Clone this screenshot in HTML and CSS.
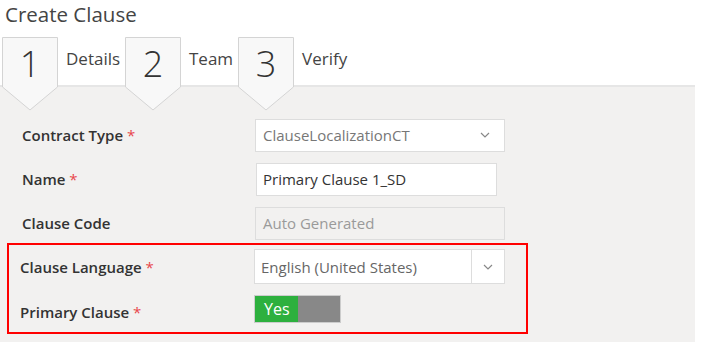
FILE: index.html
```html
<!DOCTYPE html>
<html lang="en">
<head>
    <meta charset="UTF-8">
    <meta name="viewport" content="width=device-width, initial-scale=1.0">
    <title>Create Clause</title>
    <link rel="stylesheet" href="styles.css">
</head>
<body>
    <h1 class="page-title">Create Clause</h1>

    <div class="steps">
        <div class="step">
            <svg class="tab" width="56" height="74" viewBox="0 0 56 74">
                <path d="M0.5 0.5 H55.5 V50 L28 73 L0.5 50 Z" />
                <text x="28" y="40">1</text>
            </svg>
            <span class="step-label label-details">Details</span>
        </div>
        <div class="step">
            <svg class="tab" width="56" height="74" viewBox="0 0 56 74">
                <path d="M0.5 0.5 H55.5 V50 L28 73 L0.5 50 Z" />
                <text x="28" y="40">2</text>
            </svg>
            <span class="step-label label-team">Team</span>
        </div>
        <div class="step">
            <svg class="tab" width="56" height="74" viewBox="0 0 56 74">
                <path d="M0.5 0.5 H55.5 V50 L28 73 L0.5 50 Z" />
                <text x="28" y="40">3</text>
            </svg>
            <span class="step-label">Verify</span>
        </div>
    </div>

    <div class="panel">
        <div class="row">
            <label class="field-label">Contract Type <span class="req">*</span></label>
            <div class="select">
                <span class="select-value">ClauseLocalizationCT</span>
                <svg class="chevron" width="10" height="6" viewBox="0 0 10 6"><polyline points="1,1 5,5 9,1" /></svg>
            </div>
        </div>
        <div class="row">
            <label class="field-label">Name <span class="req">*</span></label>
            <div class="text-input">Primary Clause 1_SD</div>
        </div>
        <div class="row">
            <label class="field-label">Clause Code</label>
            <div class="text-input disabled">Auto Generated</div>
        </div>

        <div class="highlight">
            <div class="row row-lang">
                <label class="field-label">Clause Language <span class="req">*</span></label>
                <div class="select split">
                    <span class="select-value">English (United States)</span>
                    <span class="select-btn">
                        <svg class="chevron" width="10" height="6" viewBox="0 0 10 6"><polyline points="1,1 5,5 9,1" /></svg>
                    </span>
                </div>
            </div>
            <div class="row row-toggle">
                <label class="field-label">Primary Clause <span class="req">*</span></label>
                <div class="toggle">
                    <span class="toggle-on">Yes</span>
                    <span class="toggle-off"></span>
                </div>
            </div>
        </div>
    </div>
</body>
</html>
```

FILE: styles.css
```css
body {
    margin: 0;
    background-color: #FFF;
    font-family: "Open Sans", "Noto Sans", sans-serif;
    color: #333;
    width: 720px;
    height: 342px;
    overflow: hidden;
}
.page-title {
    margin: 0;
    padding: 0 5px;
    font-size: 20.5px;
    font-weight: 400;
    line-height: 28px;
    color: #444;
}

/* wizard steps */
.steps {
    display: flex;
    padding-left: 2px;
    margin-top: 9px;
    margin-bottom: -26px;
    height: 74px;
    position: relative;
    z-index: 1;
}
.step {
    display: flex;
    align-items: flex-start;
}
.tab path {
    fill: #F8F8F8;
    stroke: #D4D4D4;
    stroke-width: 1;
}
.tab text {
    font-family: "Open Sans", sans-serif;
    font-size: 36px;
    font-weight: 300;
    fill: #333;
    text-anchor: middle;
}
.step-label {
    font-size: 17px;
    color: #444;
    margin-top: 10px;
    padding-left: 8px;
}
.label-details {
    width: 59px;
}
.label-team {
    width: 49px;
}

/* form panel */
.panel {
    width: 695px;
    height: 258px;
    box-sizing: border-box;
    background-color: #F2F1F0;
    border-top: 2px solid #E6E6E6;
    padding-top: 26px;
}
.row {
    display: flex;
    align-items: center;
    height: 44px;
}
.field-label {
    width: 255px;
    box-sizing: border-box;
    padding-left: 22px;
    font-size: 15px;
    font-weight: 600;
    color: #333;
}
.req {
    color: #E8474B;
    font-weight: 400;
}
.select, .text-input {
    height: 33px;
    box-sizing: border-box;
    border: 1px solid #DDD;
    background-color: #FFF;
    display: flex;
    align-items: center;
    font-size: 15px;
}
.select {
    width: 250px;
    padding: 0 14px 0 7px;
    justify-content: space-between;
    color: #777;
}
.text-input {
    width: 241px;
    padding-left: 6px;
    margin-left: 1px;
    color: #333;
}
.text-input.disabled {
    width: 250px;
    margin-left: 0;
    background-color: #F2F1F0;
    color: #9A9A9A;
    padding-left: 7px;
}
.chevron polyline {
    fill: none;
    stroke: #888;
    stroke-width: 1.2;
}

/* annotated area */
.highlight {
    width: 521px;
    margin-left: 7px;
    margin-top: -2px;
    border: 2px solid #F00;
    box-sizing: border-box;
    padding-bottom: 2px;
}
.highlight .field-label {
    width: 245px;
    padding-left: 11px;
}
.row-lang {
    height: 43px;
}
.row-toggle {
    height: 42px;
}
.row-toggle .field-label {
    padding-top: 6px;
}
.select.split {
    width: 251px;
    height: 35px;
    padding: 0 0 0 6px;
    color: #666;
}
.select-btn {
    width: 32px;
    height: 100%;
    border-left: 1px solid #DDD;
    display: flex;
    align-items: center;
    justify-content: center;
}
.toggle {
    display: flex;
    width: 87px;
    height: 28px;
    box-sizing: border-box;
    border: 1px solid #CCC;
}
.toggle-on {
    width: 43px;
    background-color: #2DB03E;
    color: #FFF;
    font-size: 16px;
    line-height: 26px;
    padding-left: 9px;
    box-sizing: border-box;
}
.toggle-off {
    flex: 1;
    background-color: #888;
}
```
